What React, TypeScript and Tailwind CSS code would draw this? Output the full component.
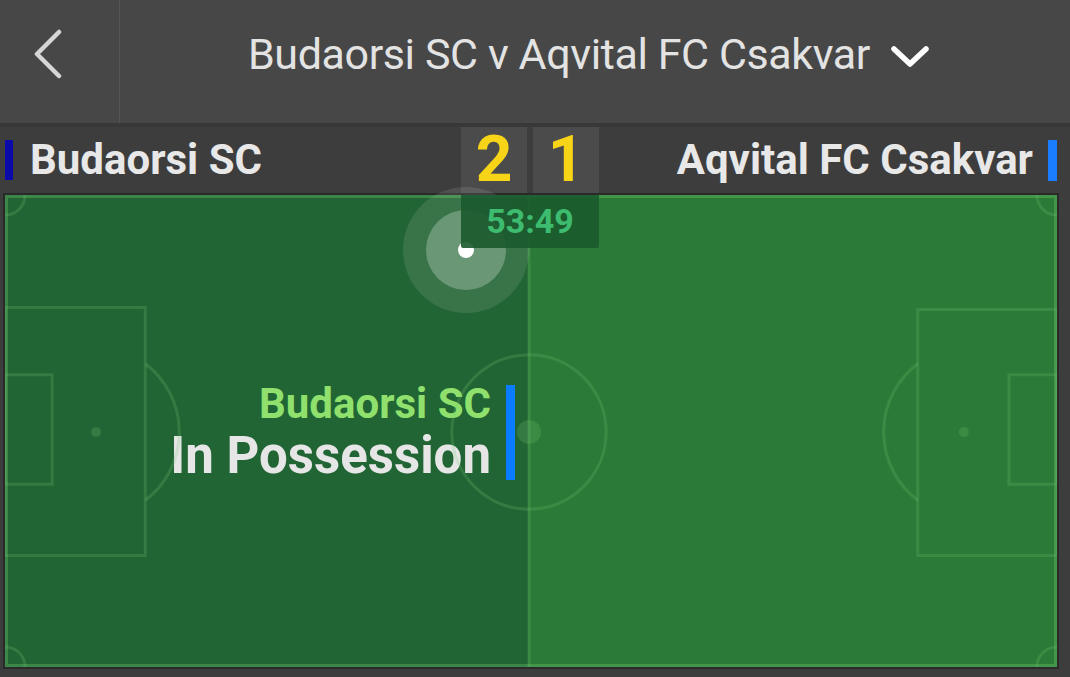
const line = "rgba(120,200,120,0.22)";

function PitchLines() {
  return (
    <svg className="absolute inset-0 h-full w-full" viewBox="0 0 1050 470" preserveAspectRatio="none">
      <g fill="none" stroke={line} strokeWidth="3">
        <rect x="1.5" y="1.5" width="1047" height="467" stroke="rgba(110,200,110,0.35)" />
        <line x1="523" y1="0" x2="523" y2="470" />
        <circle cx="523" cy="236" r="77" />
        {/* left end */}
        <rect x="0" y="112" width="140" height="247" />
        <rect x="0" y="179" width="47" height="109" />
        <path d="M140 168 A85 85 0 0 1 140 304" />
        {/* right end */}
        <rect x="911" y="114" width="139" height="245" />
        <rect x="1002" y="179" width="48" height="109" />
        <path d="M911 168 A85 85 0 0 0 911 304" />
        {/* corners */}
        <path d="M0 20 A20 20 0 0 0 20 0" />
        <path d="M1030 0 A20 20 0 0 0 1050 20" />
        <path d="M0 450 A20 20 0 0 1 20 470" />
        <path d="M1030 470 A20 20 0 0 1 1050 450" />
      </g>
      <g fill={line}>
        <circle cx="91" cy="236" r="5" />
        <circle cx="957" cy="236" r="5" />
        <circle cx="523" cy="236" r="12" />
      </g>
    </svg>
  );
}

export default function App() {
  return (
    <div
      className="flex h-[677px] w-[1070px] flex-col overflow-hidden bg-[#3d3d3d] text-[#e6e6e6]"
      style={{ fontFamily: "Roboto, 'Noto Sans', sans-serif" }}
    >
      {/* Top bar */}
      <div className="flex h-[123px] bg-[#474747]">
        <button className="flex w-[120px] items-center justify-center border-r border-[#555555] pr-[24px] pb-[16px]">
          <svg width="32" height="50" viewBox="0 0 32 50" fill="none" stroke="#d6d6d6" strokeWidth="4.5" strokeLinecap="round" strokeLinejoin="round">
            <polyline points="27,3 5,25 27,47" />
          </svg>
        </button>
        <div className="flex flex-1 items-center justify-center gap-[20px] pr-[12px] pb-[14px]">
          <span className="text-[43px] font-normal tracking-[-0.4px] text-[#e3e3e3]">Budaorsi SC v Aqvital FC Csakvar</span>
          <svg width="40" height="26" viewBox="0 0 40 26" fill="none" stroke="#ffffff" strokeWidth="5.5" strokeLinecap="round" strokeLinejoin="round" className="mt-[4px]">
            <polyline points="4,5 20,20 36,5" />
          </svg>
        </div>
      </div>
      <div className="h-[4px] bg-[#383838]" />

      {/* Score row */}
      <div className="flex h-[66px] items-stretch bg-[#3d3d3d]">
        <div className="flex w-[461px] items-center gap-[17px] pl-[5px]">
          <span className="h-[40px] w-[8px] bg-[#0a0aa8]" />
          <span className="text-[42px] font-bold leading-none text-[#e8e8e8]">Budaorsi SC</span>
        </div>
        <div className="flex gap-[6px]">
          <div className="flex w-[66px] items-center justify-center bg-[#4b4b4b] text-[64px] font-bold leading-none text-[#f7d417]">2</div>
          <div className="flex w-[66px] items-center justify-center bg-[#4b4b4b] text-[64px] font-bold leading-none text-[#f7d417]">1</div>
        </div>
        <div className="flex flex-1 items-center justify-end gap-[15px] pr-[13px]">
          <span className="text-[42px] font-bold leading-none text-[#e8e8e8]">Aqvital FC Csakvar</span>
          <span className="h-[41px] w-[9px] bg-[#1a7dff]" />
        </div>
      </div>

      {/* Pitch */}
      <div className="pl-[3px] pr-[11px]">
        <div className="border-2 border-[#2a2a2a]">
          <div className="relative flex h-[472px] bg-[#2c7a37]">
            <div className="flex w-[523px] items-center justify-end bg-[#226534] pr-[13px]">
              <div className="mt-[2px] flex items-center gap-[15px]">
                <div className="flex flex-col items-end">
                  <span className="text-[42px] font-bold leading-[48px] text-[#8fe06c]">Budaorsi SC</span>
                  <span className="text-[51px] font-bold leading-[56px] text-[#e6e6e6]">In Possession</span>
                </div>
                <span className="h-[95px] w-[9px] bg-[#0a7cff]" />
              </div>
            </div>
            <PitchLines />

            {/* ball */}
            <div className="absolute left-[398px] top-[-8px] flex h-[126px] w-[126px] items-center justify-center rounded-full bg-white/10">
              <div className="flex h-[80px] w-[80px] items-center justify-center rounded-full bg-white/25">
                <div className="h-[16px] w-[16px] rounded-full bg-white" />
              </div>
            </div>

            {/* match clock */}
            <div className="absolute left-[456px] top-0 flex h-[53px] w-[138px] items-center justify-center rounded-b-[2px] bg-[#1b5a2e]/90 text-[34px] font-bold text-[#3dbb6f]">
              53:49
            </div>
          </div>
        </div>
      </div>
    </div>
  );
}
